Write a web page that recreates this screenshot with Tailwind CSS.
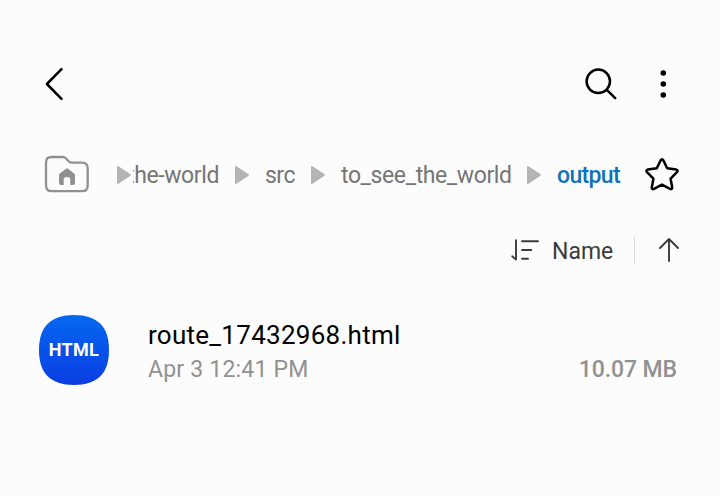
<!DOCTYPE html>
<html lang="en">
<head>
<meta charset="utf-8">
<title>My Files</title>
<script src="https://cdn.jsdelivr.net/npm/@tailwindcss/browser@4"></script>
</head>
<body class="w-[720px] h-[496px] overflow-hidden bg-[#fcfcfc] font-['Roboto',sans-serif] flex flex-col pt-[50px]">
<header class="h-[68px] flex items-center pl-[40px] pr-[43px]">
  <svg class="w-7 h-10" viewBox="40 64 28 40" fill="none" stroke="#000" stroke-width="2.5" stroke-linecap="round" stroke-linejoin="round"><path d="M61.500 69.200 46.900 84l14.600 14.800"/></svg>
  <svg class="w-10 h-10 ml-auto" viewBox="580 64 40 40" fill="none" stroke="#000" stroke-width="2.5" stroke-linecap="round"><circle cx="598.300" cy="81.300" r="11.700"/><path d="M606.800 89.800l8.400 8.400"/></svg>
  <svg class="w-7 h-10 ml-[29px]" viewBox="649 64 28 40"><g fill="#000"><circle cx="663.300" cy="73" r="2.800"/><circle cx="663.300" cy="84" r="2.800"/><circle cx="663.300" cy="95" r="2.800"/></g></svg>
</header>
<nav class="h-[114px] flex items-center pl-[42px] text-[23px] text-[#757575] whitespace-nowrap">
  <svg class="w-[50px] h-[42px] shrink-0" viewBox="42 154 50 42"><path d="M51.500 157H62.700Q64.500 157 65.800 158.300L68.700 161.200Q70.200 162.700 72.300 162.700H82Q87.700 162.700 87.700 168.500V185.500Q87.700 191.200 82 191.200H51.800Q46 191.200 46 185.500V162.500Q46 157 51.500 157Z" fill="none" stroke="#909090" stroke-width="2.300"/><path d="M66 168.700Q67 167.900 68 168.700L73.800 173.200Q75 174.100 75 175.600V183Q75 185 73 185H70.300V179.700Q70.300 177 67 177T63.700 179.700V185H61Q59 185 59 183V175.600Q59 174.100 60.200 173.200Z" fill="#909090"/></svg>
  <svg class="w-4 h-5 ml-[24px] shrink-0" viewBox="0 0 16 20" fill="#b4b4b4"><path d="M1 2Q1 .5 2.500 1.300L14.500 9.200Q15.500 10 14.500 10.800L2.500 18.700Q1 19.500 1 18Z"/></svg>
  <div class="w-[86px] ml-[1px] pt-[2px] overflow-hidden flex justify-end shrink-0"><span class="tracking-[-0.4px]">the-world</span></div>
  <svg class="w-4 h-5 ml-[15px] shrink-0" viewBox="0 0 16 20" fill="#b4b4b4"><path d="M1 2Q1 .5 2.500 1.300L14.500 9.200Q15.500 10 14.500 10.800L2.500 18.700Q1 19.500 1 18Z"/></svg>
  <div class="w-[30px] ml-[15px] pt-[2px]"><span class="tracking-[-0.5px]">src</span></div>
  <svg class="w-4 h-5 ml-[15px] shrink-0" viewBox="0 0 16 20" fill="#b4b4b4"><path d="M1 2Q1 .5 2.500 1.300L14.500 9.200Q15.500 10 14.500 10.800L2.500 18.700Q1 19.500 1 18Z"/></svg>
  <div class="w-[171px] ml-[15px] pt-[2px]"><span class="tracking-[-0.4px]">to_see_the_world</span></div>
  <svg class="w-4 h-5 ml-[14px] shrink-0" viewBox="0 0 16 20" fill="#b4b4b4"><path d="M1 2Q1 .5 2.500 1.300L14.500 9.200Q15.500 10 14.500 10.800L2.500 18.700Q1 19.500 1 18Z"/></svg>
  <div class="w-[64px] ml-[15px] pt-[2px] font-medium text-[#0f72bd]"><span class="tracking-[-0.65px]">output</span></div>
  <svg class="w-10 h-10 ml-[21px] shrink-0" viewBox="642 155 40 40" fill="none" stroke="#000" stroke-width="2.500" stroke-linejoin="round"><path d="M660.700 160.200Q662 158.200 663.300 160.200L667.200 168.200 676.300 169.600Q678.600 170.300 677 172.200L670.600 178.700 672.200 187.400Q672.200 189.800 670 188.900L662 184.600 654 188.900Q651.800 189.800 651.800 187.400L653.400 178.700 647 172.200Q645.400 170.300 647.700 169.600L656.800 168.200Z"/></svg>
</nav>
<div class="h-[38px] flex items-center pl-[508px] text-[23px] text-[#3b3b3b]">
  <svg class="w-9 h-8" viewBox="508 235 36 32" fill="none" stroke="#3b3b3b" stroke-width="1.900" stroke-linecap="round" stroke-linejoin="round"><path d="M516 240.300V259.500L512.200 256.300M522 241.300H538M522 250H531.200M522 258.700H528"/></svg>
  <div class="w-[61px] ml-[8px] pt-[2px]"><span>Name</span></div>
  <div class="w-px h-7 ml-[21px] mb-[2px] bg-[#dedede]"></div>
  <svg class="w-7 h-8 ml-[20px]" viewBox="655 235 28 32" fill="none" stroke="#3b3b3b" stroke-width="1.900" stroke-linecap="round" stroke-linejoin="round"><path d="M669 261V239M660 248l9-9 9 9"/></svg>
</div>
<main class="mt-[30px] h-[100px] flex items-center pl-[39px] pr-[43px]">
  <div class="w-[70px] h-[70px] shrink-0 grid">
    <svg class="col-start-1 row-start-1" viewBox="0 0 70 70"><defs><linearGradient id="blue" x1="0" y1="0" x2="0" y2="1"><stop stop-color="#0568ef"/><stop offset="1" stop-color="#0a3de2"/></linearGradient></defs><path d="M0 35C0 11.500 11.500 0 35 0S70 11.500 70 35 58.500 70 35 70 0 58.500 0 35Z" fill="url(#blue)"/></svg>
    <span class="col-start-1 row-start-1 place-self-center text-white font-bold text-[18px] leading-5 tracking-[0.3px] -mt-px">HTML</span>
  </div>
  <div class="ml-[39px] flex-1 pt-[6px]">
    <div class="text-[26px] leading-[33px] text-black"><span class="tracking-[0.27px]">route_17432968.html</span></div>
    <div class="flex justify-between text-[23px] leading-[35px] text-[#919191]"><span class="tracking-[0.2px]">Apr 3 12:41 PM</span><span class="font-medium tracking-[-0.1px]">10.07 MB</span></div>
  </div>
</main>
</body>
</html>
